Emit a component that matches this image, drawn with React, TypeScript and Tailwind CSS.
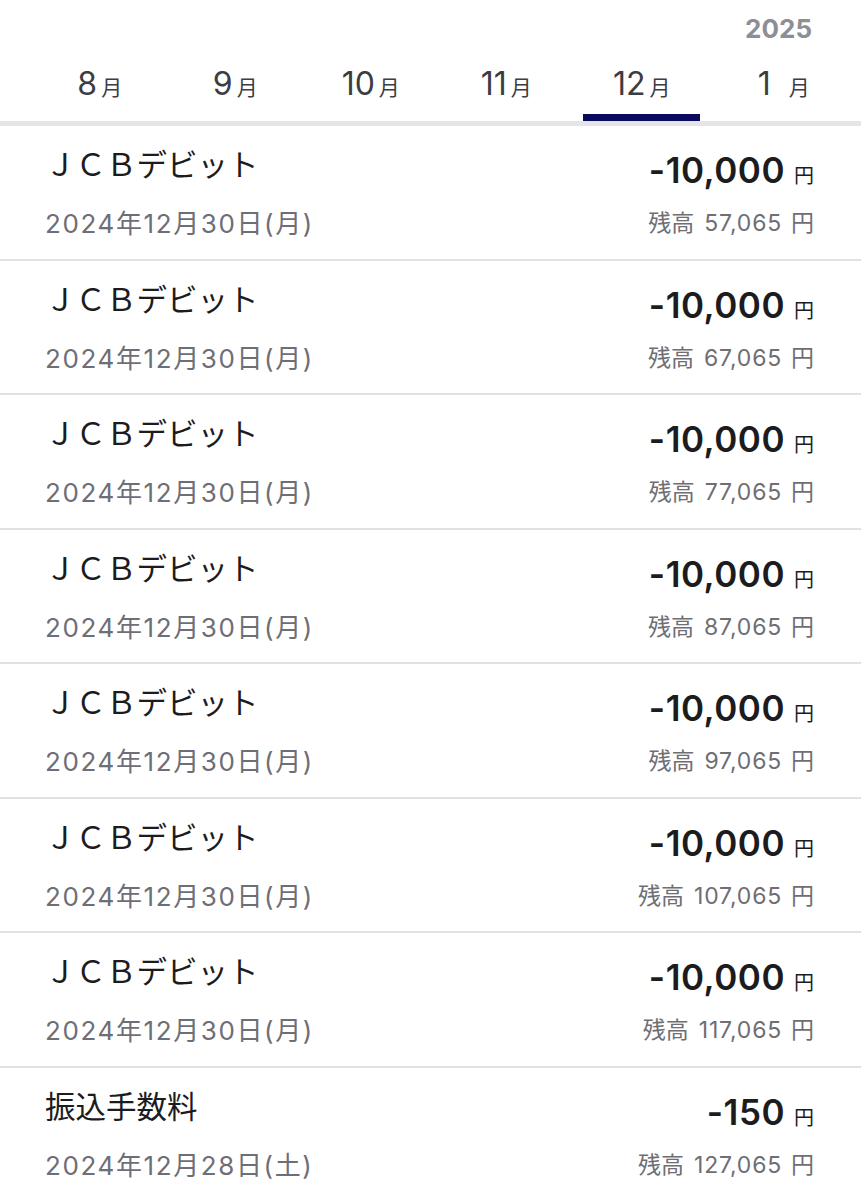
import React from "react";

const FONT = { fontFamily: 'Inter, "Noto Sans CJK JP", sans-serif' };
const CJK = { fontFamily: '"Noto Sans CJK JP", sans-serif' };

type Row = { title: string; day: string; wd: string; amount: string; balance: string };

const rows: Row[] = [
  { title: "ＪＣＢデビット", day: "30", wd: "月", amount: "-10,000", balance: "57,065" },
  { title: "ＪＣＢデビット", day: "30", wd: "月", amount: "-10,000", balance: "67,065" },
  { title: "ＪＣＢデビット", day: "30", wd: "月", amount: "-10,000", balance: "77,065" },
  { title: "ＪＣＢデビット", day: "30", wd: "月", amount: "-10,000", balance: "87,065" },
  { title: "ＪＣＢデビット", day: "30", wd: "月", amount: "-10,000", balance: "97,065" },
  { title: "ＪＣＢデビット", day: "30", wd: "月", amount: "-10,000", balance: "107,065" },
  { title: "ＪＣＢデビット", day: "30", wd: "月", amount: "-10,000", balance: "117,065" },
  { title: "振込手数料", day: "28", wd: "土", amount: "-150", balance: "127,065" },
];

const months = [
  { n: "8", active: false, spaced: false },
  { n: "9", active: false, spaced: false },
  { n: "10", active: false, spaced: false },
  { n: "11", active: false, spaced: false },
  { n: "12", active: true, spaced: false },
  { n: "1", active: false, spaced: true },
];

export default function App() {
  return (
    <div className="w-[861px] h-[1200px] overflow-hidden bg-white" style={FONT}>
      {/* header */}
      <div className="h-[121px]">
        <div className="pt-[16px] pr-[49px] text-right text-[26px] leading-[26px] font-bold text-[#8e8e93]">
          2025
        </div>
        <div className="grid grid-cols-6 pl-[32px] pr-[16px] pt-[26px]">
          {months.map((m, i) => (
            <div key={i} className="flex flex-col items-center">
              <div
                className={`h-[32px] leading-[32px] text-[32px] text-[#3c3c43] whitespace-nowrap ${
                  m.spaced ? "pl-[13px]" : ""
                }`}
              >
                <span>{m.n}</span>
                <span className={`text-[21px] ${m.spaced ? "ml-[18px]" : "ml-[4px]"}`} style={CJK}>
                  月
                </span>
              </div>
              <div
                className={`mt-[14px] h-[7px] w-[117px] ${m.active ? "bg-[#0a0a5c]" : "bg-transparent"}`}
              />
            </div>
          ))}
        </div>
      </div>
      <div className="h-[5px] bg-[#e4e4e9]" />
      {/* rows */}
      {rows.map((r, i) => (
        <div
          key={i}
          className="h-[134.5px] border-b-2 border-[#e0e0e5] flex justify-between pl-[45px] pr-[47px]"
        >
          <div className="flex flex-col pt-[17px]">
            <div className="h-[40px] leading-[40px] text-[30.5px] text-[#1c1c1e] whitespace-nowrap" style={CJK}>
              {r.title}
            </div>
            <div className="mt-[23px] h-[32px] leading-[32px] text-[26px] tracking-[1.6px] text-[#6e6e76] whitespace-nowrap">
              2024<span style={CJK}>年</span>12<span style={CJK}>月</span>
              {r.day}
              <span style={CJK}>日</span>(<span style={CJK}>{r.wd}</span>)
            </div>
          </div>
          <div className="flex flex-col items-end pt-[22px]">
            <div className="h-[44px] leading-[44px] whitespace-nowrap text-[#1c1c1e]">
              <span className="text-[35px] tracking-[0.5px] font-semibold">{r.amount}</span>
              <span className="ml-[9px] text-[20px]" style={CJK}>
                円
              </span>
            </div>
            <div className="mt-[14px] h-[30px] leading-[30px] text-[23px] text-[#6e6e73] whitespace-nowrap">
              <span style={CJK}>残高</span>
              <span className="ml-[10px] tracking-[0.8px]">{r.balance}</span>
              <span className="ml-[9px]" style={CJK}>
                円
              </span>
            </div>
          </div>
        </div>
      ))}
    </div>
  );
}
